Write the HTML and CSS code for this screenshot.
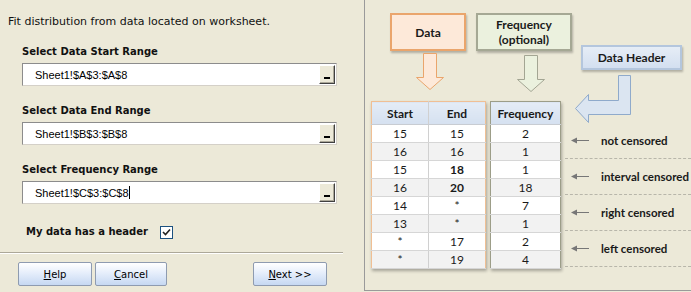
FILE: index.html
```html
<!DOCTYPE html>
<html lang="en">
<head>
    <meta charset="UTF-8">
    <meta name="viewport" content="width=device-width, initial-scale=1.0">
    <title>Fit Distribution - Data Range</title>
    <link rel="stylesheet" href="styles.css">
</head>
<body>
    <div class="dialog">
        <div class="left">
            <p class="intro">Fit distribution from data located on worksheet.</p>

            <div class="field">
                <div class="label">Select Data Start Range</div>
                <div class="range">
                    <span class="value">Sheet1!$A$3:$A$8</span>
                    <button class="pick"><i></i></button>
                </div>
            </div>

            <div class="field">
                <div class="label">Select Data End Range</div>
                <div class="range">
                    <span class="value">Sheet1!$B$3:$B$8</span>
                    <button class="pick"><i></i></button>
                </div>
            </div>

            <div class="field">
                <div class="label">Select Frequency Range</div>
                <div class="range">
                    <span class="value">Sheet1!$C$3:$C$8<span class="caret"></span></span>
                    <button class="pick"><i></i></button>
                </div>
            </div>

            <div class="check">
                <span>My data has a header</span>
                <span class="box">
                    <svg width="9" height="9" viewBox="0 0 9 9"><path d="M1 4 L3.5 6.5 L8 1.5" fill="none" stroke="#222" stroke-width="1.6"/></svg>
                </span>
            </div>

            <div class="footer">
                <button class="btn"><u>H</u>elp</button>
                <button class="btn btn-cancel"><u>C</u>ancel</button>
                <button class="btn btn-next"><u>N</u>ext &gt;&gt;</button>
            </div>
        </div>

        <div class="right">
            <!-- callouts over the example sheet -->
            <div class="callout callout-data">Data</div>
            <div class="callout callout-freq">Frequency<br>(optional)</div>
            <div class="callout callout-header">Data Header</div>

            <svg class="arrow arrow-data" width="30" height="38" viewBox="0 0 30 38">
                <path d="M8.5 0.5 H21.5 V24.5 H28.5 L15 36.5 L1.5 24.5 H8.5 Z" fill="#fde9d9" stroke="#eaa56c"/>
            </svg>
            <svg class="arrow arrow-freq" width="30" height="38" viewBox="0 0 30 38">
                <path d="M8.5 0.5 H21.5 V24.5 H28.5 L15 36.5 L1.5 24.5 H8.5 Z" fill="#ebf1de" stroke="#a3a593"/>
            </svg>
            <svg class="arrow arrow-header" width="58" height="49" viewBox="0 0 58 49">
                <path d="M44.5 0.5 H56.5 V39.5 H14.5 V47.5 L1.5 33.5 L14.5 19.5 V25.5 H44.5 Z" fill="#dbe5f1" stroke="#8faacb"/>
            </svg>

            <div class="sheet">
                <table class="grid grid-data">
                    <colgroup><col class="col-data"><col class="col-data"></colgroup>
                    <tr><th>Start</th><th>End</th></tr>
                    <tr><td>15</td><td>15</td></tr>
                    <tr><td>16</td><td>16</td></tr>
                    <tr><td>15</td><td><b>18</b></td></tr>
                    <tr><td>16</td><td><b>20</b></td></tr>
                    <tr><td>14</td><td>*</td></tr>
                    <tr><td>13</td><td>*</td></tr>
                    <tr><td>*</td><td>17</td></tr>
                    <tr><td>*</td><td>19</td></tr>
                </table>

                <table class="grid grid-freq">
                    <colgroup><col class="col-freq"></colgroup>
                    <tr><th>Frequency</th></tr>
                    <tr><td>2</td></tr>
                    <tr><td>1</td></tr>
                    <tr><td>1</td></tr>
                    <tr><td>18</td></tr>
                    <tr><td>7</td></tr>
                    <tr><td>1</td></tr>
                    <tr><td>2</td></tr>
                    <tr><td>4</td></tr>
                </table>

                <ul class="notes">
                    <li><svg width="18" height="7" viewBox="0 0 18 7"><path d="M18 3.5 H5" stroke="#777" stroke-width="1"/><path d="M0 3.5 L6 0.5 V6.5 Z" fill="#777"/></svg>not censored</li>
                    <li><svg width="18" height="7" viewBox="0 0 18 7"><path d="M18 3.5 H5" stroke="#777" stroke-width="1"/><path d="M0 3.5 L6 0.5 V6.5 Z" fill="#777"/></svg>interval censored</li>
                    <li><svg width="18" height="7" viewBox="0 0 18 7"><path d="M18 3.5 H5" stroke="#777" stroke-width="1"/><path d="M0 3.5 L6 0.5 V6.5 Z" fill="#777"/></svg>right censored</li>
                    <li><svg width="18" height="7" viewBox="0 0 18 7"><path d="M18 3.5 H5" stroke="#777" stroke-width="1"/><path d="M0 3.5 L6 0.5 V6.5 Z" fill="#777"/></svg>left censored</li>
                </ul>
            </div>
        </div>
    </div>
</body>
</html>
```

FILE: styles.css
```css
body {
    margin: 0;
    background-color: #ece9d8;
    font-family: "DejaVu Sans", sans-serif;
    font-size: 10px;
    color: #111;
}

.dialog {
    display: flex;
    width: 691px;
    height: 292px;
}

/* left side: range pickers */

.left {
    width: 364px;
    flex-shrink: 0;
    padding-top: 15px;
    box-sizing: border-box;
}

.intro {
    margin: 0 0 16px 8px;
    font-size: 11px;
    line-height: 14px;
}

.field {
    margin: 0 0 18px 22px;
}

.label {
    font-weight: bold;
    line-height: 14px;
    margin-bottom: 4px;
}

.range {
    display: flex;
    align-items: center;
    width: 315px;
    height: 23px;
    box-sizing: border-box;
    background-color: #fff;
    border: 1px solid #8c8c8c;
    border-right-color: #d4d0c8;
    border-bottom-color: #d4d0c8;
    padding: 0 1px 0 12px;
}

.value {
    flex: 1;
    font-family: "Liberation Sans", sans-serif;
    font-size: 11px;
    color: #000;
}

.caret {
    display: inline-block;
    width: 1px;
    height: 13px;
    background: #000;
    vertical-align: -2px;
}

.pick {
    width: 16px;
    height: 19px;
    padding: 0;
    background-color: #ece9d8;
    border: 1px solid;
    border-color: #fff #404040 #404040 #fff;
    box-shadow: inset -1px -1px 0 #aca899;
    display: flex;
    align-items: flex-end;
    justify-content: center;
}

.pick i {
    width: 6px;
    height: 2px;
    background: #000;
    margin-bottom: 4px;
}

.check {
    display: flex;
    align-items: center;
    gap: 12px;
    margin: 21px 0 0 26px;
    font-weight: bold;
    line-height: 14px;
}

.box {
    width: 11px;
    height: 11px;
    background: #fff;
    border: 1px solid #1c5180;
    display: flex;
    align-items: center;
    justify-content: center;
}

.footer {
    margin-top: 13px;
    width: 343px;
    border-top: 1px solid #aca899;
    box-shadow: inset 0 1px 0 #fff;
    padding: 9px 0 0 18px;
    display: flex;
    box-sizing: border-box;
}

.btn {
    width: 74px;
    height: 24px;
    font-family: "DejaVu Sans", sans-serif;
    font-size: 10px;
    color: #000;
    border: 1px solid #8e9bb0;
    border-radius: 2px;
    background: linear-gradient(#ffffff, #e6eefb 45%, #c6d8f2);
    padding: 0;
}

.btn-cancel {
    width: 72px;
    margin-left: 3px;
}

.btn-next {
    margin-left: 86px;
}

/* right side: example worksheet */

.right {
    flex: 1;
    position: relative;
    height: 290px;
    border-left: 1px solid #9a9a9a;
    border-bottom: 1px solid #9a9a9a;
    font-family: Lato, sans-serif;
    font-weight: bold;
    font-size: 12px;
    color: #1a1a1a;
}

.callout {
    position: absolute;
    box-sizing: border-box;
    display: flex;
    align-items: center;
    justify-content: center;
    text-align: center;
    line-height: 15px;
    box-shadow: 1px 2px 2px rgba(0, 0, 0, 0.25);
}

.callout-data {
    left: 25px;
    top: 13px;
    width: 76px;
    height: 38px;
    background: #fde9d9;
    border: 2px solid #eaa56c;
}

.callout-freq {
    left: 111px;
    top: 13px;
    width: 96px;
    height: 38px;
    background: #ebf1de;
    border: 2px solid #a5a894;
}

.callout-header {
    left: 216px;
    top: 45px;
    width: 101px;
    height: 25px;
    background: linear-gradient(#e6edf6, #d3dff0);
    border: 2px solid #b4c6dd;
}

.arrow {
    position: absolute;
}

.arrow-data {
    left: 50px;
    top: 53px;
}

.arrow-freq {
    left: 151px;
    top: 55px;
}

.arrow-header {
    left: 209px;
    top: 75px;
}

.sheet {
    display: flex;
    align-items: flex-start;
    padding: 101px 0 0 6px;
}

.grid {
    border-collapse: collapse;
    table-layout: fixed;
    flex-shrink: 0;
    background: #fff;
    box-shadow: 1px 2px 3px rgba(0, 0, 0, 0.3);
}

.col-data {
    width: 57px;
}

.col-freq {
    width: 70px;
}

.grid th,
.grid td {
    text-align: center;
    padding: 0;
    overflow: hidden;
    border-left: 1px solid #d0d0d0;
}

.grid th {
    height: 22px;
    background: linear-gradient(#e4ecf6, #d5e1f0);
    border-bottom: 1px solid #c8ccd2;
}

.grid td {
    height: 18px;
    box-sizing: border-box;
    font-weight: normal;
    border-bottom: 1px solid #d6d6d6;
}

.grid td b {
    font-weight: bold;
}

.grid tr:nth-child(odd) td {
    background: #f2f2f2;
}

.grid th:first-child,
.grid td:first-child {
    border-left: none;
}

.grid-data {
    border: 1px solid #f0bf94;
}

.grid-freq {
    margin-left: 4px;
    border: 1px solid #9c9d88;
}

.notes {
    list-style: none;
    margin: 22px 0 0 4px;
    padding: 0;
    flex: 1;
    white-space: nowrap;
    font-size: 11.5px;
}

.notes li {
    display: flex;
    align-items: center;
    gap: 12px;
    height: 36px;
    box-sizing: border-box;
    padding-left: 6px;
    border-bottom: 1px dashed #b8b6aa;
}
```
